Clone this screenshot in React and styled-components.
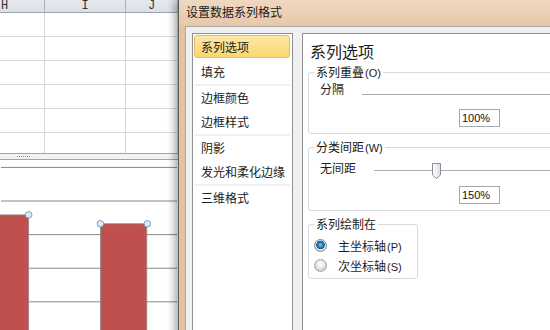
import React from 'react'
import styled, { createGlobalStyle } from 'styled-components'

const GlobalStyle = createGlobalStyle`
    html, body {
        margin: 0;
        padding: 0;
        background: #ffffff;
    }
    body {
        font-family: "Noto Sans CJK SC", "Noto Sans", sans-serif;
        font-size: 12px;
        color: #1e1e1e;
    }
`;

const Screen = styled.div`
    display: flex;
    width: 550px;
    height: 330px;
    overflow: hidden;
`;

/* ---------- worksheet behind the dialog ---------- */

const Sheet = styled.div`
    display: flex;
    flex-direction: column;
    width: 178px;
    flex-shrink: 0;
    background: #ffffff;
`;

const HeaderRow = styled.div`
    display: flex;
    height: 12px;
    background: linear-gradient(#e6eaef, #dadfe6);
    border-bottom: 1px solid #9aa3ae;
`;

const HeaderCell = styled.div`
    width: ${p => p.$w}px;
    flex-shrink: 0;
    flex-grow: ${p => (p.$grow ? 1 : 0)};
    border-right: 1px solid #a9b3bf;
    font-family: "Liberation Mono", monospace;
    font-size: 12px;
    line-height: 12px;
    color: #333;
    text-align: ${p => p.$align || 'center'};
    padding-left: ${p => p.$pad || 0}px;
    box-sizing: border-box;
    overflow: hidden;
`;

const GridRow = styled.div`
    display: flex;
    height: ${p => p.$h}px;
    border-bottom: 1px solid #d6d6d6;
    box-sizing: border-box;
`;

const GridCell = styled.div`
    width: ${p => p.$w}px;
    flex-shrink: 0;
    flex-grow: ${p => (p.$grow ? 1 : 0)};
    border-right: 1px solid #d6d6d6;
    box-sizing: border-box;
`;

const Splitter = styled.div`
    height: 5px;
    border-top: 1px solid #a3a3a3;
    border-bottom: 1px solid #a3a3a3;
    background: #f1f2f4;
    display: flex;
    align-items: center;
    padding-left: 17px;
`;

const Grip = styled.span`
    width: 13px;
    border-top: 1px dotted #8a8f96;
`;

const Chart = styled.svg`
    display: block;
    flex: 1;
`;

/* ---------- dialog ---------- */

const Dialog = styled.div`
    position: relative;
    display: flex;
    flex-direction: column;
    width: 380px;
    height: 360px;
    flex-shrink: 0;
    border-left: 1px solid #5d5d5d;
    background: linear-gradient(90deg, #e4c3a3, #ecd3ba 40%, #e8c7a8);
    box-shadow: -4px 0 7px rgba(0, 0, 0, 0.3);
`;

const TitleBar = styled.div`
    height: 26px;
    padding-left: 7px;
    line-height: 24px;
    font-size: 12px;
    color: #1a1a1a;
    background: linear-gradient(#efd8c1, #e7c8a9);
`;

const Client = styled.div`
    flex: 1;
    display: flex;
    gap: 9px;
    margin-left: 6px;
    padding: 6px 0 0 6px;
    background: #f0f0f0;
    border-top: 1px solid #a6a6a6;
    border-left: 1px solid #a6a6a6;
`;

const Nav = styled.div`
    width: 101px;
    box-sizing: border-box;
    flex-shrink: 0;
    background: #ffffff;
    border: 1px solid #8f9192;
    padding: 1px 2px 0 1px;
`;

const NavGroup = styled.div`
    border-bottom: ${p => (p.$last ? 'none' : '2px solid #eef0f3')};
`;

const NavItem = styled.div`
    height: ${p => (p.$active ? 23 : 24)}px;
    line-height: ${p => (p.$active ? 21 : 24)}px;
    margin-bottom: ${p => (p.$active ? 2 : 0)}px;
    padding-left: ${p => (p.$active ? 6 : 7)}px;
    box-sizing: border-box;
    font-size: 12px;
    white-space: nowrap;
    color: #222;
    border-radius: 3px;
    border: ${p => (p.$active ? '1px solid #e2bd5c' : 'none')};
    background: ${p => (p.$active ? 'linear-gradient(#fee9a8, #fbd66f)' : 'transparent')};
`;

const Panel = styled.div`
    flex: 1;
    background: #ffffff;
    border-top: 1px solid #8f9192;
    border-left: 1px solid #8f9192;
    padding: 6px 0 0 5px;
`;

const PanelTitle = styled.div`
    margin-left: 2px;
    font-size: 16px;
    line-height: 22px;
    color: #1a1a1a;
`;

const Group = styled.fieldset`
    margin: ${p => p.$top}px 0 0 0;
    padding: 0 0 ${p => p.$bottom}px 0;
    width: ${p => (p.$w ? `${p.$w}px` : 'auto')};
    box-sizing: border-box;
    border: 1px solid #d3dbe1;
    border-radius: 3px;
    min-width: 0;
`;

const Legend = styled.legend`
    margin-left: 5px;
    padding: 0 2px;
    font-size: 12px;
    line-height: 16px;
    color: #1a1a1a;
`;

const Key = styled.span`
    font-family: "Liberation Sans", sans-serif;
    font-size: 11px;
    margin-left: 1px;
`;

const SliderRow = styled.div`
    display: flex;
    align-items: flex-start;
    margin-top: ${p => p.$top}px;
    padding-left: 11px;
`;

const SliderLabel = styled.div`
    width: ${p => p.$w}px;
    flex-shrink: 0;
    line-height: 16px;
    font-size: 12px;
`;

const Track = styled.div`
    position: relative;
    flex: 1;
    height: 1px;
    margin-top: ${p => p.$offset}px;
    background: #adadad;
`;

const Thumb = styled.svg`
    position: absolute;
    top: -8px;
    display: block;
`;

const ValueBox = styled.div`
    width: 41px;
    height: 18px;
    box-sizing: border-box;
    margin: ${p => p.$top}px 0 0 150px;
    border: 1px solid #a4a9ae;
    font-family: "Liberation Sans", sans-serif;
    font-size: 11px;
    line-height: 16px;
    padding-left: 2px;
    color: #111;
`;

const RadioRow = styled.div`
    display: flex;
    align-items: center;
    height: 20px;
    padding-left: 5px;
    gap: 11px;
    margin-top: ${p => p.$top || 0}px;
    font-size: 12px;
`;

const RadioDot = styled.span`
    width: 13px;
    height: 13px;
    box-sizing: border-box;
    border-radius: 50%;
    border: 1px solid ${p => (p.$on ? '#7d8a96' : '#a0a4a8')};
    background: ${p =>
        p.$on
            ? 'radial-gradient(circle at 50% 45%, #7ec7f0 0, #2a7fb8 2.5px, #135b8c 4px, #e9ecef 4.6px, #cfd4d8 6px)'
            : 'radial-gradient(circle at 50% 40%, #ffffff 0, #eceeef 3px, #cfd2d5 6px)'};
`;

const Handle = ({ x, y }) => (
    <circle cx={x} cy={y} r="3.3" fill="#dce9f6" stroke="#7c9cbf" strokeWidth="1" />
)

const SheetChart = () => {
    const lines = [7, 41, 75, 109, 143]
    return (
        <Chart width="178" height="172" viewBox="0 0 178 172">
            {lines.map(y => (
                <line key={y} x1="0" x2="178" y1={y + 0.5} y2={y + 0.5} stroke="#878787" strokeWidth="1" />
            ))}
            <rect x="-2" y="55.5" width="30" height="130" fill="#c0504d" stroke="#8f8f8f" strokeWidth="0.8" />
            <rect x="100.5" y="64.5" width="47" height="130" fill="#c0504d" stroke="#8f8f8f" strokeWidth="0.8" />
            <Handle x={28} y={55.5} />
            <Handle x={100.5} y={64.5} />
            <Handle x={148} y={64.5} />
        </Chart>
    )
}

const Worksheet = () => {
    const rows = [24, 24, 24, 24, 24, 20]
    return (
        <Sheet>
            <HeaderRow>
                <HeaderCell $w={45} $align="left" $pad={1}>H</HeaderCell>
                <HeaderCell $w={81}>I</HeaderCell>
                <HeaderCell $w={52} $grow>J</HeaderCell>
            </HeaderRow>
            {rows.map((h, i) => (
                <GridRow key={i} $h={h} style={i === rows.length - 1 ? { borderBottom: 'none' } : undefined}>
                    <GridCell $w={45} />
                    <GridCell $w={81} />
                    <GridCell $w={52} $grow />
                </GridRow>
            ))}
            <Splitter>
                <Grip />
            </Splitter>
            <SheetChart />
        </Sheet>
    )
}

const navGroups = [
    ['系列选项', '填充'],
    ['边框颜色', '边框样式'],
    ['阴影', '发光和柔化边缘'],
    ['三维格式'],
]

const FormatDialog = () => (
    <Dialog>
        <TitleBar>设置数据系列格式</TitleBar>
        <Client>
            <Nav>
                {navGroups.map((group, gi) => (
                    <NavGroup key={gi} $last={gi === navGroups.length - 1}>
                        {group.map(item => (
                            <NavItem key={item} $active={item === '系列选项'}>{item}</NavItem>
                        ))}
                    </NavGroup>
                ))}
            </Nav>
            <Panel>
                <PanelTitle>系列选项</PanelTitle>
                <Group $top={2} $bottom={6}>
                    <Legend>系列重叠<Key>(O)</Key></Legend>
                    <SliderRow $top={0}>
                        <SliderLabel $w={42}>分隔</SliderLabel>
                        <Track $offset={13} />
                    </SliderRow>
                    <ValueBox $top={12}>100%</ValueBox>
                </Group>
                <Group $top={5} $bottom={6}>
                    <Legend>分类间距<Key>(W)</Key></Legend>
                    <SliderRow $top={4}>
                        <SliderLabel $w={54}>无间距</SliderLabel>
                        <Track $offset={10}>
                            <Thumb width="11" height="18" viewBox="0 0 11 18" style={{ left: 57 }}>
                                <defs>
                                    <linearGradient id="thumbFill" x1="0" x2="1" y1="0" y2="0">
                                        <stop offset="0" stopColor="#ffffff" />
                                        <stop offset="1" stopColor="#d9dcdf" />
                                    </linearGradient>
                                </defs>
                                <path d="M1.5 1.5 H9.5 V13 L5.5 16.5 L1.5 13 Z" fill="url(#thumbFill)" stroke="#8b9096" strokeWidth="1" strokeLinejoin="round" />
                            </Thumb>
                        </Track>
                    </SliderRow>
                    <ValueBox $top={10}>150%</ValueBox>
                </Group>
                <Group $top={5} $bottom={3} $w={110}>
                    <Legend>系列绘制在</Legend>
                    <RadioRow $top={3}>
                        <RadioDot $on />
                        <span>主坐标轴<Key>(P)</Key></span>
                    </RadioRow>
                    <RadioRow>
                        <RadioDot />
                        <span>次坐标轴<Key>(S)</Key></span>
                    </RadioRow>
                </Group>
            </Panel>
        </Client>
    </Dialog>
)

const App = () => {
    return (
        <Screen>
            <GlobalStyle />
            <Worksheet />
            <FormatDialog />
        </Screen>
    )
}

export default App
